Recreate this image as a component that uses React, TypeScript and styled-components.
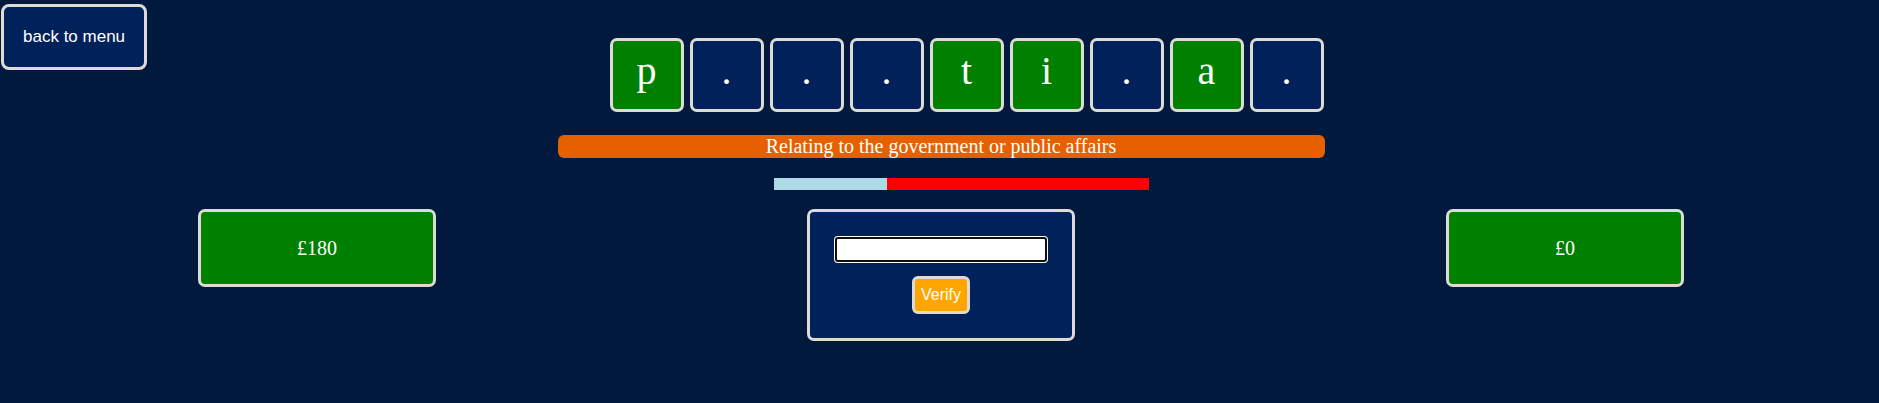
import { createGlobalStyle, styled } from 'styled-components'

const GlobalStyle = createGlobalStyle`
  html, body {
    margin: 0;
    padding: 0;
    background-color: #00193c;
  }
  body {
    font-family: "Liberation Serif", "Times New Roman", serif;
    color: #fff;
  }
  * {
    box-sizing: border-box;
  }
`

const BORDER = '#dedad6'

const BackButton = styled.button`
  position: absolute;
  top: 4px;
  left: 1px;
  padding: 20px 19px;
  background-color: #00215a;
  border: 3px solid ${BORDER};
  border-radius: 8px;
  color: #fff;
  font-family: "Liberation Sans", Arial, sans-serif;
  font-size: 17px;
  cursor: pointer;
`

const Page = styled.main`
  padding-top: 38px;
  display: flex;
  flex-direction: column;
  align-items: center;
`

const LetterRow = styled.div`
  display: flex;
  gap: 6px;
  padding-left: 54px;
`

const Tile = styled.div<{ $found: boolean }>`
  width: 74px;
  height: 74px;
  border: 3px solid ${BORDER};
  border-radius: 7px;
  background-color: ${(p) => (p.$found ? '#008000' : '#00215a')};
  display: flex;
  align-items: center;
  justify-content: center;
  padding-bottom: 9px;
  font-size: 40px;
  line-height: 1;
`

const Hint = styled.div`
  margin-top: 23px;
  margin-left: 3px;
  width: 767px;
  background-color: #e66000;
  border-radius: 6px;
  text-align: center;
  font-size: 20px;
  line-height: 23px;
`

const Progress = styled.div`
  margin-top: 20px;
  margin-left: 44px;
  width: 375px;
  height: 12px;
  display: flex;
  background-color: #ff0000;
`

const ProgressFill = styled.div`
  height: 100%;
  background-color: #add8e6;
`

const MainRow = styled.section`
  margin-top: 19px;
  width: 100%;
  padding-left: 3px;
  display: flex;
  justify-content: center;
  align-items: flex-start;
  gap: 371px;
`

const ScoreBox = styled.div`
  width: 238px;
  height: 78px;
  background-color: #008000;
  border: 3px solid ${BORDER};
  border-radius: 7px;
  display: flex;
  align-items: center;
  justify-content: center;
  font-size: 20px;
`

const AnswerPanel = styled.form`
  width: 268px;
  padding: 24px;
  background-color: #00215a;
  border: 3px solid ${BORDER};
  border-radius: 7px;
  display: flex;
  flex-direction: column;
  align-items: center;
  gap: 13px;
`

const AnswerInput = styled.input`
  width: 212px;
  height: 25px;
  margin: 1px;
  background-color: #fff;
  border: 2px solid #101010;
  border-radius: 3px;
  box-shadow: 0 0 0 1px #fff;
  outline: none;
  font-family: "Liberation Sans", Arial, sans-serif;
  font-size: 13px;
`

const VerifyButton = styled.button`
  padding: 7px 6px;
  background-color: #ffa500;
  border: 3px solid ${BORDER};
  border-radius: 6px;
  color: #fff;
  font-family: "Liberation Sans", Arial, sans-serif;
  font-size: 16px;
  line-height: 18px;
  cursor: pointer;
`

const letters = ['p', '.', '.', '.', 't', 'i', '.', 'a', '.']
const progress = 30

export default function App() {
  return (
    <>
      <GlobalStyle />
      <BackButton>back to menu</BackButton>
      <Page>
        <LetterRow>
          {letters.map((l, i) => (
            <Tile key={i} $found={l !== '.'}>
              {l}
            </Tile>
          ))}
        </LetterRow>
        <Hint>Relating to the government or public affairs</Hint>
        <Progress>
          <ProgressFill style={{ width: `${progress}%` }} />
        </Progress>
        <MainRow>
          <ScoreBox>£180</ScoreBox>
          <AnswerPanel onSubmit={(e) => e.preventDefault()}>
            <AnswerInput type="text" />
            <VerifyButton type="submit">Verify</VerifyButton>
          </AnswerPanel>
          <ScoreBox>£0</ScoreBox>
        </MainRow>
      </Page>
    </>
  )
}
